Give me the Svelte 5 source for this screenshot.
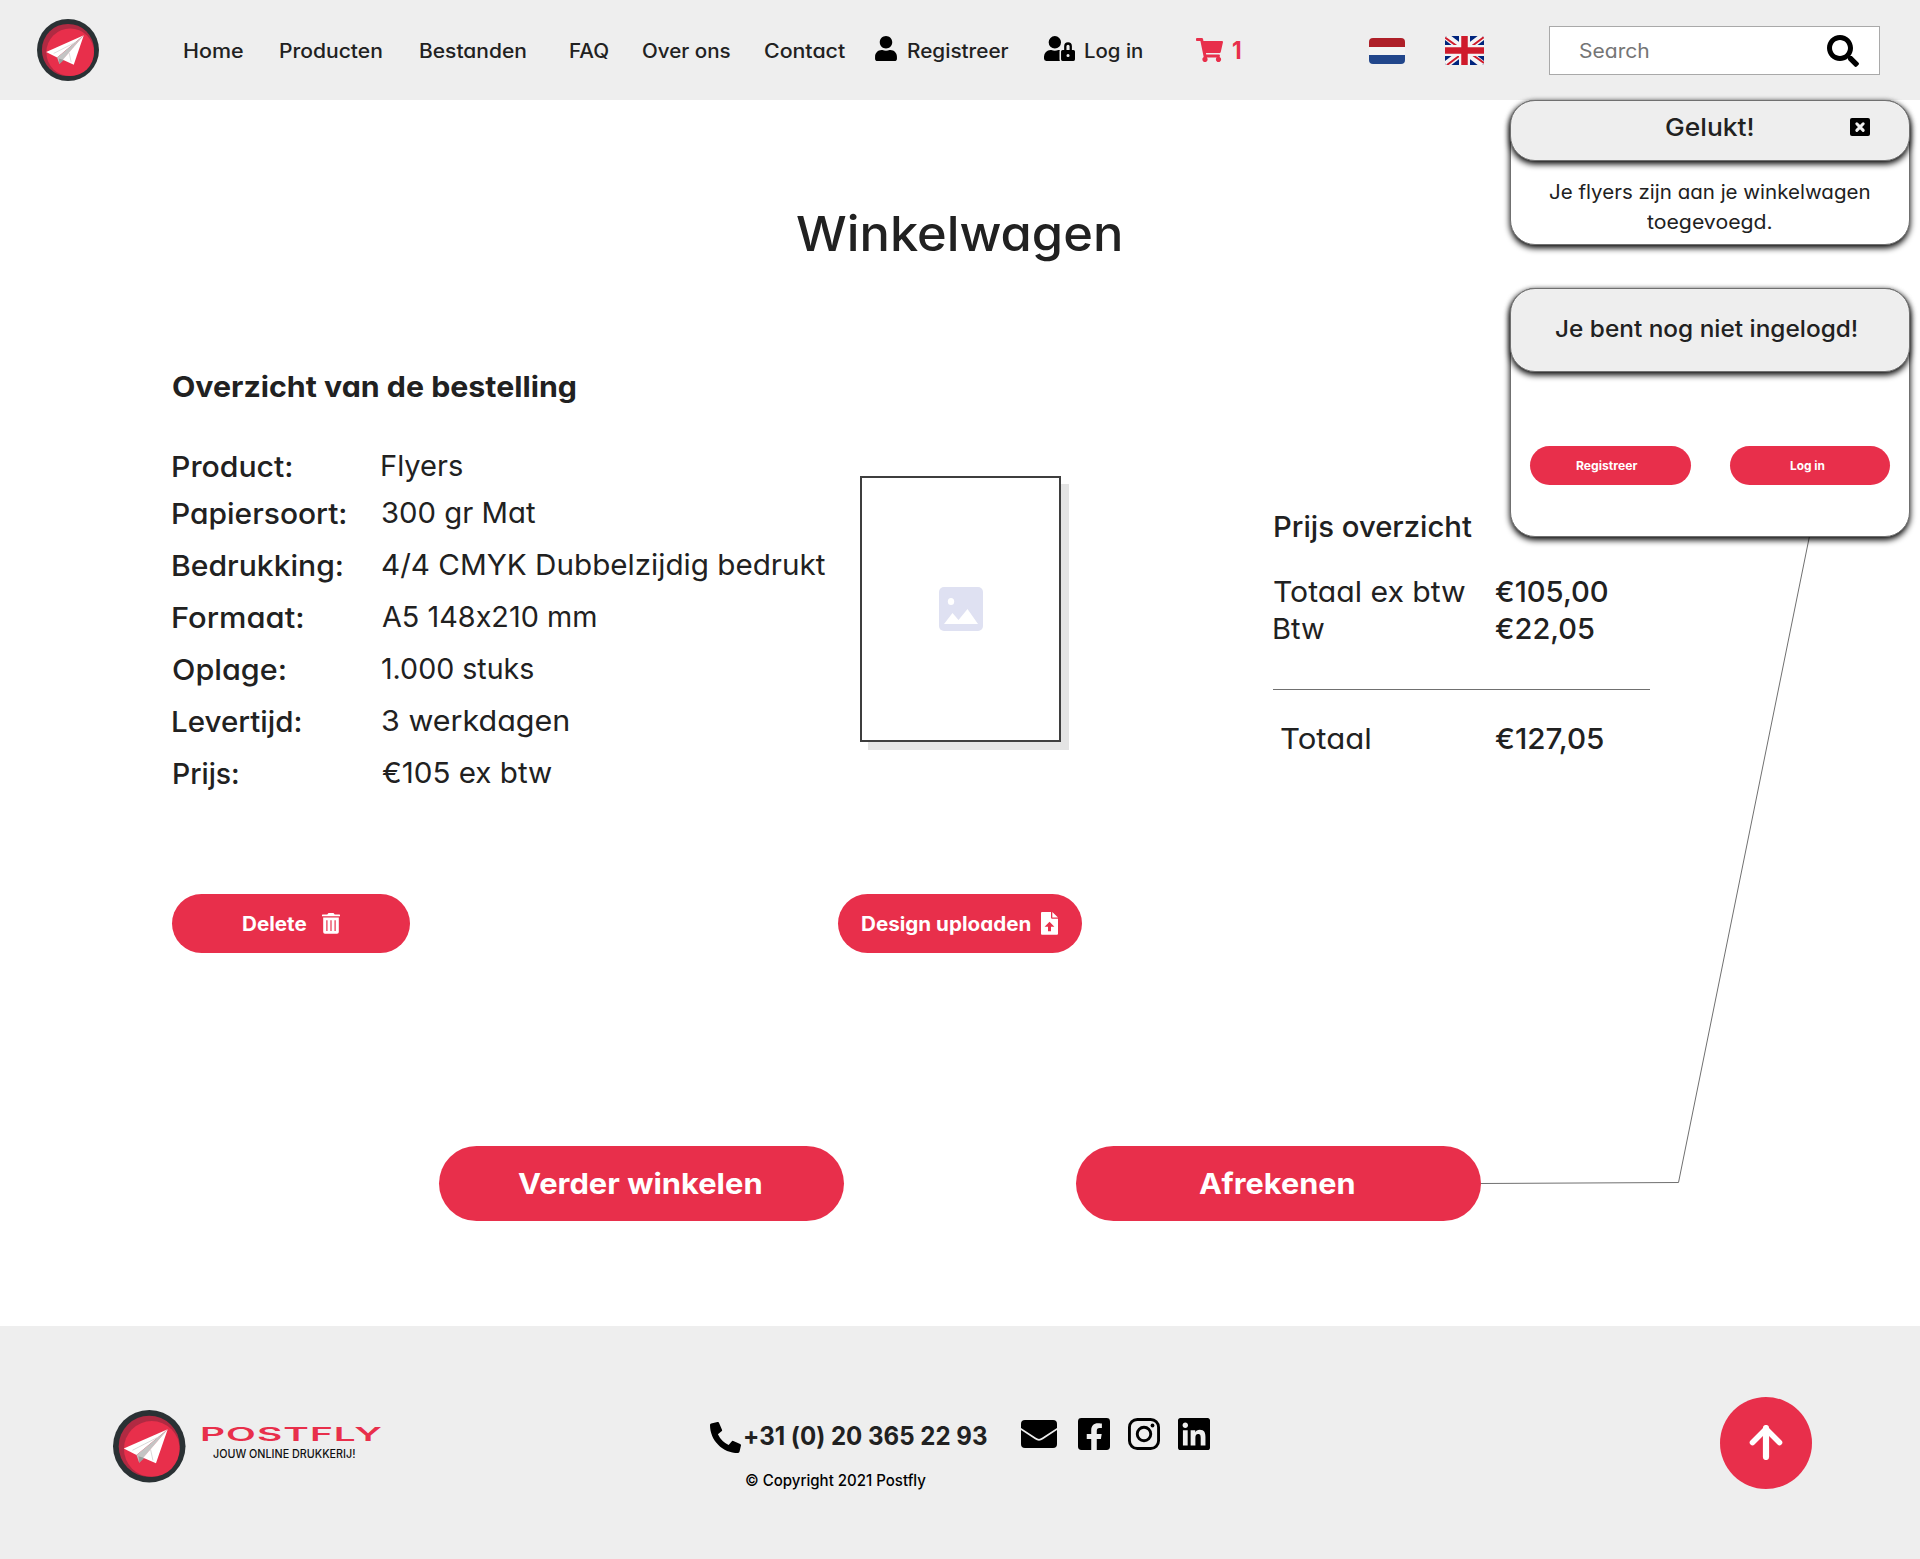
<script>
  // Stretches a label so that its inked part is `width` pixels wide,
  // and trims the side bearings so that labels align on their glyph edges.
  function fit(node, width) {
    const cs = getComputedStyle(node);
    const ctx = document.createElement('canvas').getContext('2d');
    ctx.font = `${cs.fontWeight} ${cs.fontSize} ${cs.fontFamily}`;
    ctx.letterSpacing = cs.letterSpacing === 'normal' ? '0px' : cs.letterSpacing;
    const m = ctx.measureText(node.textContent);
    const left = -m.actualBoundingBoxLeft;
    const right = m.width - m.actualBoundingBoxRight;
    const natural = node.getBoundingClientRect().width;
    const scale = width / (natural - left - right);
    node.style.transform = `scaleX(${scale})`;
    node.style.marginLeft = `${-left * scale}px`;
    node.style.marginRight = `${width - natural + left * scale}px`;
  }

  const nav = [
    { text: 'Home', w: 59, gap: 0 },
    { text: 'Producten', w: 102, gap: 37 },
    { text: 'Bestanden', w: 106, gap: 37.5 },
    { text: 'FAQ', w: 38, gap: 44 },
    { text: 'Over ons', w: 87, gap: 35.5 },
    { text: 'Contact', w: 80.5, gap: 34.5 }
  ];

  const details = [
    { label: 'Product:', lw: 118.5, value: 'Flyers', vw: 80 },
    { label: 'Papiersoort:', lw: 172.5, value: '300 gr Mat', vw: 153 },
    { label: 'Bedrukking:', lw: 169, value: '4/4 CMYK Dubbelzijdig bedrukt', vw: 443 },
    { label: 'Formaat:', lw: 129.5, value: 'A5 148x210 mm', vw: 214 },
    { label: 'Oplage:', lw: 112, value: '1.000 stuks', vw: 151 },
    { label: 'Levertijd:', lw: 127.5, value: '3 werkdagen', vw: 186 },
    { label: 'Prijs:', lw: 64, value: '€105 ex btw', vw: 169.5 }
  ];
</script>

{#snippet t(text, w)}<span class="t" use:fit={w}>{text}</span>{/snippet}

{#snippet logo(cls)}
  <svg class={cls} viewBox="0 0 216 216">
    <circle cx="108" cy="108" r="108" fill="#2a3134" />
    <circle cx="108" cy="108" r="91" fill="#b02a42" />
    <circle cx="115.500" cy="116" r="83" fill="#e82f4b" />
    <path d="M32 115L163 57 70 134z" fill="#fff" />
    <path d="M70 134L163 57 92 141 78 157z" fill="#c4c4c4" />
    <path d="M78 157L76 138 94 143z" fill="#9b9b9b" />
    <path d="M90 142L163 57 128 159z" fill="#fff" />
    <path d="M58 120L136 80M112 118L119 150" stroke="#d2d2d2" stroke-width="2.500" fill="none" />
  </svg>
{/snippet}

<div class="page">
  <header>
    {@render logo('logo')}
    <nav>
      {#each nav as item}
        <a style:margin-left="{item.gap}px">{@render t(item.text, item.w)}</a>
      {/each}
      <svg class="user" viewBox="0 0 448 512"><path d="M224 256c70.700 0 128-57.300 128-128S294.700 0 224 0 96 57.300 96 128s57.300 128 128 128zm89.600 32h-16.700c-22.200 10.200-46.900 16-72.900 16s-50.600-5.800-72.900-16h-16.700C60.200 288 0 348.200 0 422.400V464c0 26.500 21.500 48 48 48h352c26.500 0 48-21.500 48-48v-41.600c0-74.200-60.200-134.400-134.400-134.400z" /></svg>
      <a>{@render t('Registreer', 101)}</a>
      <svg class="userlock" viewBox="0 0 640 512"><path d="M224 256A128 128 0 1 0 96 128a128 128 0 0 0 128 128zm96 64a63.080 63.080 0 0 1 8.100-30.500c-4.800-.5-9.500-1.500-14.500-1.500h-16.700a174.080 174.080 0 0 1-145.800 0h-16.700A134.430 134.430 0 0 0 0 422.400V464a48 48 0 0 0 48 48h280.900a63.540 63.540 0 0 1-8.900-32zm288-32h-32v-80a80 80 0 0 0-160 0v80h-32a32 32 0 0 0-32 32v160a32 32 0 0 0 32 32h224a32 32 0 0 0 32-32V320a32 32 0 0 0-32-32zM496 432a32 32 0 1 1 32-32 32 32 0 0 1-32 32zm32-144h-64v-80a32 32 0 0 1 64 0z" /></svg>
      <a>{@render t('Log in', 57.5)}</a>
      <svg class="cart" viewBox="0 0 576 512"><path d="M528.120 301.319l47.273-208C578.806 78.301 567.391 64 551.990 64H159.208l-9.166-44.810C147.758 8.021 137.930 0 126.529 0H24C10.745 0 0 10.745 0 24v16c0 13.255 10.745 24 24 24h69.883l70.248 343.435C147.325 417.100 136 435.222 136 456c0 30.928 25.072 56 56 56s56-25.072 56-56c0-15.674-6.447-29.835-16.824-40h209.647C430.447 426.165 424 440.326 424 456c0 30.928 25.072 56 56 56s56-25.072 56-56c0-22.172-12.888-41.332-31.579-50.405l5.517-24.276c3.413-15.018-8.002-29.319-23.403-29.319H218.117l-6.545-32h293.145c11.206 0 20.920-7.754 23.403-18.681z" /></svg>
      <span class="count">{@render t('1', 7.5)}</span>
    </nav>
    <svg class="nl" viewBox="0 0 36 26">
      <defs><clipPath id="nlc"><rect width="36" height="26" rx="4" /></clipPath></defs>
      <g clip-path="url(#nlc)">
        <rect width="36" height="26" fill="#f3f3f3" />
        <rect width="36" height="9" fill="#ae1f28" />
        <rect y="17" width="36" height="9" fill="#21468b" />
      </g>
    </svg>
    <svg class="uk" viewBox="0 0 39 29">
      <defs><clipPath id="ukc"><rect width="39" height="29" rx="2.500" /></clipPath></defs>
      <g clip-path="url(#ukc)">
        <rect width="39" height="29" fill="#00247d" />
        <path d="M-2 -2L41 31M41 -2L-2 31" stroke="#f4f4f4" stroke-width="7" />
        <path d="M0 1.500L16 13M39 1L23 13M2 29L18 17M39 27L22 15" stroke="#cf1b2b" stroke-width="2" />
        <path d="M19.500 0V29M0 14.500H39" stroke="#f4f4f4" stroke-width="11" />
        <path d="M19.500 0V29M0 14.500H39" stroke="#cf1b2b" stroke-width="6.500" />
      </g>
    </svg>
    <div class="search">
      {@render t('Search', 69)}
      <svg viewBox="0 0 512 512"><path d="M505 442.700L405.300 343c-4.500-4.500-10.600-7-17-7H372c27.600-35.300 44-79.700 44-128C416 93.100 322.900 0 208 0S0 93.100 0 208s93.100 208 208 208c48.300 0 92.700-16.400 128-44v16.300c0 6.400 2.500 12.500 7 17l99.700 99.700c9.400 9.400 24.600 9.400 33.900 0l28.300-28.300c9.400-9.400 9.400-24.600.1-34zM208 336c-70.700 0-128-57.200-128-128 0-70.700 57.200-128 128-128 70.700 0 128 57.200 128 128 0 70.700-57.200 128-128 128z" /></svg>
    </div>
  </header>

  <main>
    <h1>{@render t('Winkelwagen', 323)}</h1>

    <section class="order">
      <div class="overview">
        <h2>{@render t('Overzicht van de bestelling', 402.5)}</h2>
        <dl>
          {#each details as row}
            <div class="row">
              <dt>{@render t(row.label, row.lw)}</dt>
              <dd>{@render t(row.value, row.vw)}</dd>
            </div>
          {/each}
        </dl>
      </div>
      <div class="preview">
        <svg viewBox="0 0 44 44">
          <rect width="44" height="44" rx="5" fill="#dfe1f2" />
          <ellipse cx="12" cy="14.500" rx="3.200" ry="3.500" fill="#fff" />
          <path d="M5 37L13.500 26 19.500 33 28.500 22 39 37z" fill="#fff" />
        </svg>
      </div>
      <div class="prices">
        <h3>{@render t('Prijs overzicht', 197)}</h3>
        <div class="price"><span>{@render t('Totaal ex btw', 191)}</span><b>{@render t('€105,00', 113)}</b></div>
        <div class="price"><span>{@render t('Btw', 50)}</span><b>{@render t('€22,05', 99)}</b></div>
        <hr />
        <div class="price total"><span>{@render t('Totaal', 88.5)}</span><b>{@render t('€127,05', 108.5)}</b></div>
      </div>
    </section>

    <div class="actions">
      <button class="delete">
        {@render t('Delete', 63)}
        <svg viewBox="0 0 18 21"><path fill-rule="evenodd" d="M.6 1.500H5.300L6.200.3Q6.500 0 6.900 0H11.100Q11.500 0 11.800.3L12.700 1.500H17.400Q18 1.500 18 2.100V3.300H0V2.100Q0 1.500 .6 1.500zM1.200 4.600H16.800V19Q16.800 20.700 15 20.700H3Q1.200 20.700 1.200 19zM4.300 7.300V18H5.500V7.300zM8.400 7.300V18H9.600V7.300zM12.500 7.300V18H13.700V7.300z" /></svg>
      </button>
      <button class="upload">
        {@render t('Design uploaden', 168)}
        <svg viewBox="0 0 17 23"><path fill-rule="evenodd" d="M1 0H10V5.500Q10 6.800 11.200 6.800H17V21.700Q17 22.800 16 22.800H1Q0 22.800 0 21.700V1Q0 0 1 0zM11.300 0L17 5.500H11.300zM8.500 9.800L3.600 14.800H7V19.300H10V14.800H13.400z" /></svg>
      </button>
    </div>

    <div class="checkout">
      <button>{@render t('Verder winkelen', 243.5)}</button>
      <button>{@render t('Afrekenen', 155.5)}</button>
    </div>
  </main>

  <footer>
    {@render logo('footlogo')}
    <div class="brand">
      <div class="name">{@render t('POSTFLY', 180)}</div>
      <div class="tag">{@render t('JOUW ONLINE DRUKKERIJ!', 142)}</div>
    </div>
    <div class="contact">
      <div class="line">
        <svg class="phone" viewBox="0 0 512 512"><path d="M497.390 361.800l-112-48a24 24 0 0 0-28 6.900l-49.600 60.600A370.660 370.660 0 0 1 130.600 204.110l60.600-49.600a23.940 23.940 0 0 0 6.900-28l-48-112A24.160 24.160 0 0 0 122.600.61l-104 24A24 24 0 0 0 0 48c0 256.500 207.900 464 464 464a24 24 0 0 0 23.400-18.600l24-104a24.290 24.290 0 0 0-14.010-27.600z" /></svg>
        {@render t('+31 (0) 20 365 22 93', 241.5)}
      </div>
      <small>{@render t('© Copyright 2021 Postfly', 180)}</small>
    </div>
    <div class="social">
      <svg class="mail" viewBox="0 0 36 28"><rect width="36" height="28" rx="4" /><path d="M-1 8.300L14.500 18.600Q18 21 21.500 18.600L37 8.300" fill="none" stroke="#eee" stroke-width="1.800" /></svg>
      <svg viewBox="0 32 448 448"><path d="M400 32H48A48 48 0 0 0 0 80v352a48 48 0 0 0 48 48h137.250V327.690h-63V256h63v-54.640c0-62.150 37-96.480 93.670-96.480 27.140 0 55.520 4.840 55.520 4.840v61h-31.270c-30.810 0-40.420 19.120-40.420 38.730V256h68.780l-11 71.690h-57.780V480H400a48 48 0 0 0 48-48V80a48 48 0 0 0-48-48z" /></svg>
      <svg viewBox="0 0 32 32"><g fill="none" stroke="#000" stroke-width="2.900"><rect x="1.450" y="1.450" width="29.100" height="29.100" rx="7.800" /><circle cx="16" cy="16" r="6.750" /></g><circle cx="24.500" cy="7.500" r="1.900" /></svg>
      <svg viewBox="0 32 448 448"><path d="M416 32H31.900C14.300 32 0 46.500 0 64.300v383.400C0 465.500 14.300 480 31.900 480H416c17.600 0 32-14.500 32-32.300V64.300c0-17.800-14.400-32.300-32-32.300zM135.400 416H69V202.200h66.500V416zm-33.200-243c-21.300 0-38.500-17.300-38.500-38.500S80.900 96 102.200 96c21.200 0 38.500 17.300 38.500 38.500 0 21.300-17.200 38.500-38.500 38.500zm282.100 243h-66.400V312c0-24.800-.5-56.700-34.500-56.700-34.600 0-39.900 27-39.900 54.900V416h-66.400V202.200h63.700v29.200h.9c8.900-16.800 30.600-34.500 62.900-34.500 67.200 0 79.700 44.300 79.700 101.900V416z" /></svg>
    </div>
    <div class="up">
      <svg viewBox="0 0 34 35"><path d="M17 3V32" stroke-width="6.200" /><path d="M3.500 17.500L17 4 30.500 17.500" stroke-width="5.600" /></svg>
    </div>
  </footer>

  <svg class="connector" viewBox="0 0 330 650"><path d="M328.500 0L197.500 646.500 0 647.500" /></svg>

  <aside>
    <div class="card success">
      <div class="head">
        {@render t('Gelukt!', 87)}
        <svg viewBox="0 0 20 18"><rect width="20" height="18" rx="2" /><path d="M6.800 5.800L13.200 12.400M13.200 5.800L6.800 12.400" stroke="#eee" stroke-width="3" stroke-linecap="round" /></svg>
      </div>
      <p>{@render t('Je flyers zijn aan je winkelwagen', 321)}<br />{@render t('toegevoegd.', 125)}</p>
    </div>
    <div class="card login">
      <div class="head">{@render t('Je bent nog niet ingelogd!', 301)}</div>
      <div class="choices">
        <button>{@render t('Registreer', 61.5)}</button>
        <button>{@render t('Log in', 34.5)}</button>
      </div>
    </div>
  </aside>
</div>

<style>
  :global(body) { margin: 0; background: #fff; }
  .page {
    position: relative;
    width: 1920px;
    height: 1559px;
    overflow: hidden;
    display: flex;
    flex-direction: column;
    font-family: Inter, 'Open Sans', sans-serif;
    font-feature-settings: 'cv11' 1, 'calt' 0;
    color: #212121;
  }
  .t { display: inline-block; white-space: nowrap; transform-origin: 0 50%; }
  svg { display: block; flex: none; }
  h1, h2, h3, dl, dd, p { margin: 0; font-weight: 500; }
  button {
    box-sizing: border-box;
    display: flex;
    align-items: center;
    justify-content: center;
    border: 0;
    padding: 0;
    font: inherit;
    font-feature-settings: inherit;
    font-weight: 700;
    color: #fff;
    background: #e82f4b;
  }
  button svg { fill: #fff; }

  header {
    box-sizing: border-box;
    height: 100px;
    display: flex;
    align-items: center;
    padding-left: 37px;
    background: #eee;
    font-size: 19.5px;
    font-weight: 500;
  }
  .logo { width: 62px; height: 62px; }
  nav { display: flex; align-items: center; width: 1184px; margin-left: 85.5px; }
  nav a { line-height: 28px; padding-top: 1px; }
  .user { width: 22px; height: 25px; margin: 0 11.500px 3px 29.500px; }
  .userlock { width: 31px; height: 25px; margin: 0 10.500px 3px 34px; }
  .cart { width: 27px; height: 24px; margin-left: 53px; fill: #e82f4b; }
  .count { margin-left: 10px; font-size: 24px; font-weight: 700; color: #e82f4b; }
  .nl { width: 36px; height: 26px; margin-top: 2px; margin-left: .5px; }
  .uk { width: 39px; height: 29px; margin-left: 40px; }
  .search {
    box-sizing: border-box;
    width: 331px;
    height: 49px;
    margin: 1px 0 0 65px;
    padding: 0 20px 0 30px;
    display: flex;
    align-items: center;
    justify-content: space-between;
    border: 1px solid #a9a9a9;
    background: #fff;
    color: #757575;
    font-weight: 400;
  }
  .search svg { width: 32px; height: 32px; }

  main { height: 1226px; }
  h1 { padding: 104px 2px 0 0; text-align: center; font-size: 48.500px; line-height: 60px; }
  .order { display: flex; height: 433px; margin-top: 102px; padding-left: 172px; font-size: 29px; }
  .overview { width: 688px; padding-top: 1px; }
  h2 { padding-left: 1px; font-size: 29px; font-weight: 700; line-height: 40px; }
  dl { margin-top: 34px; }
  .row { display: flex; line-height: 52px; }
  .row:first-child { box-sizing: border-box; height: 47px; padding-top: 4px; line-height: 43px; }
  dt { box-sizing: border-box; width: 210px; padding-left: 1.500px; font-weight: 500; }
  dd { margin-top: -1px; font-weight: 400; }
  .preview {
    box-sizing: border-box;
    width: 201px;
    height: 266px;
    margin-top: 110px;
    display: flex;
    align-items: center;
    justify-content: center;
    border: 2px solid #3e3e3e;
    background: #fff;
    box-shadow: 8px 8px 0 #e4e4e4;
  }
  .preview svg { width: 44px; height: 44px; }
  .prices { width: 377px; margin-left: 212px; padding-top: 141px; }
  h3 { padding-left: 2px; margin-bottom: 26px; font-size: 29px; line-height: 40px; }
  .price { display: grid; grid-template-columns: 221px 1fr; padding-left: 1px; line-height: 37px; font-weight: 400; }
  .price b { font-weight: 500; }
  hr { height: 1px; margin: 42px 0 30px; border: 0; background: #707070; }
  .total > span { padding-left: 7.500px; }

  .actions { display: flex; gap: 428px; margin-top: 95px; padding-left: 172px; font-size: 19.5px; }
  .actions button { height: 59px; border-radius: 30px; }
  .delete { width: 238px; gap: 15.500px; padding-left: 1px; }
  .delete svg { width: 18px; height: 21px; }
  .upload { width: 244px; gap: 10px; }
  .upload svg { width: 17px; height: 23px; }
  .checkout { display: flex; gap: 232px; margin-top: 193px; padding-left: 439px; font-size: 29px; }
  .checkout button { width: 405px; height: 75px; border-radius: 38px; padding-right: 4px; }

  footer { display: flex; align-items: flex-start; height: 233px; background: #eee; }
  .footlogo { width: 72.500px; height: 72.500px; margin: 84px 0 0 113px; }
  .brand { width: 179px; margin: 97px 0 0 16.500px; }
  .name { height: 24px; font-size: 18px; line-height: 24px; font-weight: 600; letter-spacing: .5px; color: #e82f4b; }
  .tag { padding-left: 11px; font-size: 11.500px; line-height: 14px; font-weight: 500; color: #111; }
  .contact { width: 311px; margin: 92px 0 0 329px; }
  .line { display: flex; align-items: center; gap: 4px; height: 36px; font-size: 25px; font-weight: 700; }
  .phone { width: 31px; height: 31px; margin-top: 2px; }
  small { display: block; padding-left: 36px; margin-top: 16px; font-size: 15.500px; line-height: 22px; font-weight: 500; color: #000; }
  .social { display: flex; align-items: center; gap: 18px; margin-top: 92px; }
  .social svg { width: 32px; height: 32px; }
  .social .mail { width: 36px; height: 28px; margin-right: 3px; }
  .up {
    width: 92px;
    height: 92px;
    margin: 70.500px 0 0 509.500px;
    display: flex;
    align-items: center;
    justify-content: center;
    border-radius: 50%;
    background: #e82f4b;
  }
  .up svg { width: 34px; height: 35px; fill: none; stroke: #fff; stroke-linecap: round; stroke-linejoin: round; }

  .connector { position: absolute; left: 1481px; top: 536px; width: 330px; height: 650px; fill: none; stroke: #707070; }

  aside { position: absolute; top: 100px; left: 1510px; width: 400px; }
  .card, .head {
    box-sizing: border-box;
    border: 1px solid #707070;
    border-radius: 25px;
    box-shadow: 0 3px 6px #000;
  }
  .card { background: #fff; }
  .head { display: flex; align-items: center; justify-content: center; margin: -1px; background: #eee; font-weight: 500; }
  .success { height: 145px; }
  .success .head { height: 61px; padding: 0 39px 7px 155px; justify-content: space-between; font-size: 24.500px; }
  .success .head svg { width: 20px; height: 18px; margin-top: -1px; }
  .success p { margin-top: 17px; padding-right: 1px; text-align: center; font-size: 19.5px; line-height: 30px; font-weight: 400; }
  .login { height: 249px; margin-top: 43px; }
  .login .head { height: 84px; padding: 0 7px 4px 0; font-size: 23.500px; }
  .choices { display: flex; gap: 39px; margin: 75px 19px 0; }
  .choices button { width: 161px; height: 39px; padding: 0 8px 1px 0; border-radius: 20px; font-size: 12px; }
  .choices button:last-child { padding-right: 5px; }
</style>
